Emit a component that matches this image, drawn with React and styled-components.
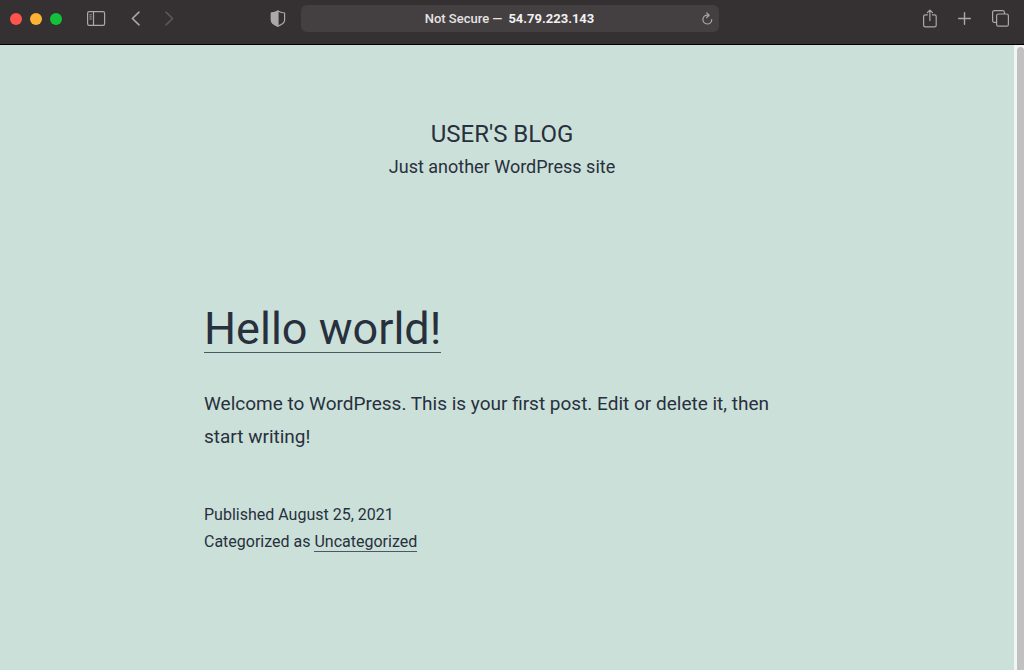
import React, { useState } from 'react'
import styled, { createGlobalStyle } from "styled-components";

const GlobalStyle=createGlobalStyle`
*{
box-sizing:border-box;
}
body{
margin:0;
background:#cbe0d9;
font-family:Roboto, Inter, "Liberation Sans", sans-serif;
}`;

const Window=styled.div`
display:flex;
flex-direction:column;
min-height:100vh;
`;
const Toolbar=styled.header`
display:grid;
grid-template-columns:1fr minmax(200px, 418px) 1fr;
align-items:center;
padding:5px 15px 12px 10px;
background:#353132;
border-bottom:1px solid #000;
`;
const ToolGroup=styled.div`
display:flex;
align-items:center;
justify-content:${props=>props.$end ? "flex-end" : "flex-start"};
`;
const Lights=styled.div`
display:flex;
gap:8px;
margin-right:25px;
`;
const Light=styled.button`
width:12px;
height:12px;
padding:0;
border:0;
border-radius:50%;
background:${props=>props.$color};
`;
const Tool=styled.button`
display:flex;
padding:0;
border:0;
background:none;
color:${props=>props.$dim ? "#5c5859" : "#aba8a9"};
margin-left:${props=>props.$gap || "0"};
`;
const Shield=styled(Tool)`
margin-left:auto;
margin-right:15px;
`;
const AddressBar=styled.form`
display:grid;
grid-template-columns:1fr auto 1fr;
align-items:center;
height:27px;
padding:0 6px;
border-radius:6px;
background:#444041;
`;
const Address=styled.div`
grid-column:2;
display:flex;
align-items:center;
gap:6px;
font-size:13px;
line-height:16px;
color:#e4e2e3;
`;
const AddressLabel=styled.label`
font-weight:500;
`;
const AddressInput=styled.input`
field-sizing:content;
padding:0;
border:0;
outline:0;
background:none;
color:#f2f0f1;
font:inherit;
font-weight:700;
`;
const Reload=styled(Tool)`
justify-self:end;
`;

const Viewport=styled.div`
display:flex;
flex:1;
`;
const Page=styled.div`
flex:1;
padding:72px 10px 72px 0;
background:#cbe0d9;
color:#28303d;
`;
const ScrollTrack=styled.div`
width:10px;
padding:2px 0 0 3px;
background:#f3f4f4;
display:flex;
`;
const ScrollThumb=styled.div`
flex:1;
border-radius:4px 4px 0 0;
background:#c1c1c1;
`;
const SiteHeader=styled.div`
text-align:center;
margin-bottom:116px;
`;
const SiteTitle=styled.h1`
margin:0;
font-size:24px;
line-height:34px;
font-weight:400;
text-transform:uppercase;
`;
const Tagline=styled.p`
margin:0;
font-size:18px;
line-height:32px;
`;
const Post=styled.article`
max-width:596px;
margin:0 auto;
`;
const PostTitle=styled.h2`
margin:0 0 28px;
font-size:45px;
line-height:60px;
font-weight:400;
`;
const PostLink=styled.a`
color:inherit;
text-decoration:none;
border-bottom:1px solid #4c575f;
`;
const TitleLink=styled(PostLink)`
display:inline-block;
line-height:46px;
`;
const Excerpt=styled.p`
margin:0 0 48px;
font-size:19px;
line-height:33px;
`;
const Meta=styled.div`
font-size:16px;
line-height:27px;
`;

const SidebarIcon=()=>(
    <svg width="19" height="15" viewBox="0 0 19 15" fill="none" stroke="currentColor">
        <rect x="0.6" y="0.6" width="17" height="13.8" rx="1.6" strokeWidth="1.2"/>
        <path d="M6.5 1v13" strokeWidth="1.2"/>
        <path d="M2.4 3.8h2.4M2.4 5.9h2.4M2.4 8h2.4" strokeWidth="0.9"/>
    </svg>
)
const ChevronIcon=({right})=>(
    <svg width="9" height="15" viewBox="0 0 9 15" fill="none" stroke="currentColor" strokeWidth="1.6" strokeLinecap="round" strokeLinejoin="round">
        <path d={right ? "M1 1.2l6.6 6.3L1 13.8" : "M8 1.2L1.4 7.5L8 13.8"}/>
    </svg>
)
const ShieldIcon=()=>(
    <svg width="16" height="17" viewBox="0 0 16 17" stroke="currentColor" strokeWidth="1.2" strokeLinejoin="round">
        <path d="M8 1C6.2 2.3 3.800 2.700 1.400 3v7.200c0 2.600 3 4.400 6.600 5.900c3.600-1.500 6.600-3.300 6.600-5.900V3C12.200 2.700 9.800 2.300 8 1z" fill="none"/>
        <path d="M8 1C6.2 2.3 3.800 2.700 1.400 3v7.200c0 2.600 3 4.400 6.600 5.900z" fill="currentColor"/>
    </svg>
)
const ReloadIcon=()=>(
    <svg width="11" height="13" viewBox="0 0 11 13" fill="none" stroke="currentColor" strokeWidth="1.2" strokeLinecap="round" strokeLinejoin="round">
        <path d="M6.6 3.2H5.3a4.4 4.4 0 1 0 4.4 4.5"/>
        <path d="M4.7 0.9l2.4 2.3l-2.4 2.3"/>
    </svg>
)
const ShareIcon=()=>(
    <svg width="14" height="19" viewBox="0 0 14 19" fill="none" stroke="currentColor" strokeWidth="1.2" strokeLinecap="round" strokeLinejoin="round">
        <path d="M4.4 5.8H2.2c-1 0-1.6.6-1.6 1.6v8.800c0 1 .6 1.600 1.600 1.600h9.400c1 0 1.600-.6 1.600-1.600V7.400c0-1-.6-1.600-1.600-1.600H9.400"/>
        <path d="M6.9 11.6V1.2M4.3 3.7L6.9 1.1l2.6 2.6"/>
    </svg>
)
const PlusIcon=()=>(
    <svg width="13" height="13" viewBox="0 0 13 13" fill="none" stroke="currentColor" strokeWidth="1.4" strokeLinecap="round">
        <path d="M6.5 0.7v11.6M0.7 6.5h11.6"/>
    </svg>
)
const TabsIcon=()=>(
    <svg width="17" height="17" viewBox="0 0 17 17" fill="none" stroke="currentColor" strokeWidth="1.2">
        <rect x="4.6" y="4" width="11.8" height="12.2" rx="1.8"/>
        <path d="M4.6 12.4H2.4c-1.1 0-1.8-.7-1.8-1.8V2.4C.6 1.3 1.3.6 2.4.6h8.200c1.100 0 1.800.7 1.800 1.800v1.600"/>
    </svg>
)

const lights=[
    {name:"Close",color:"#ff544e"},
    {name:"Minimize",color:"#fdb233"},
    {name:"Zoom",color:"#14c13b"}
]

const App = () => {
    const [address,setAddress]=useState("54.79.223.143")

    return (
        <>
        <GlobalStyle/>
        <Window>
            <Toolbar>
                <ToolGroup>
                    <Lights>
                        {lights.map((item)=>(
                            <Light key={item.name} $color={item.color} aria-label={item.name}/>
                        ))}
                    </Lights>
                    <Tool aria-label="Sidebar"><SidebarIcon/></Tool>
                    <Tool $gap="25px" aria-label="Back"><ChevronIcon/></Tool>
                    <Tool $gap="25px" $dim aria-label="Forward"><ChevronIcon right/></Tool>
                    <Shield aria-label="Privacy report"><ShieldIcon/></Shield>
                </ToolGroup>
                <AddressBar onSubmit={(e)=>e.preventDefault()}>
                    <Address>
                        <AddressLabel htmlFor="address">Not Secure —</AddressLabel>
                        <AddressInput id="address" type="text" value={address} onChange={(e)=>setAddress(e.target.value)}/>
                    </Address>
                    <Reload type="submit" aria-label="Reload"><ReloadIcon/></Reload>
                </AddressBar>
                <ToolGroup $end>
                    <Tool aria-label="Share"><ShareIcon/></Tool>
                    <Tool $gap="21px" aria-label="New tab"><PlusIcon/></Tool>
                    <Tool $gap="21px" aria-label="Tab overview"><TabsIcon/></Tool>
                </ToolGroup>
            </Toolbar>
            <Viewport>
                <Page>
                    <SiteHeader>
                        <SiteTitle>User's Blog</SiteTitle>
                        <Tagline>Just another WordPress site</Tagline>
                    </SiteHeader>
                    <Post>
                        <PostTitle><TitleLink href="#hello-world">Hello world!</TitleLink></PostTitle>
                        <Excerpt>Welcome to WordPress. This is your first post. Edit or delete it, then start writing!</Excerpt>
                        <Meta>
                            <div>Published August 25, 2021</div>
                            <div>Categorized as <PostLink href="#uncategorized">Uncategorized</PostLink></div>
                        </Meta>
                    </Post>
                </Page>
                <ScrollTrack><ScrollThumb/></ScrollTrack>
            </Viewport>
        </Window>
        </>
    )
}

export default App
